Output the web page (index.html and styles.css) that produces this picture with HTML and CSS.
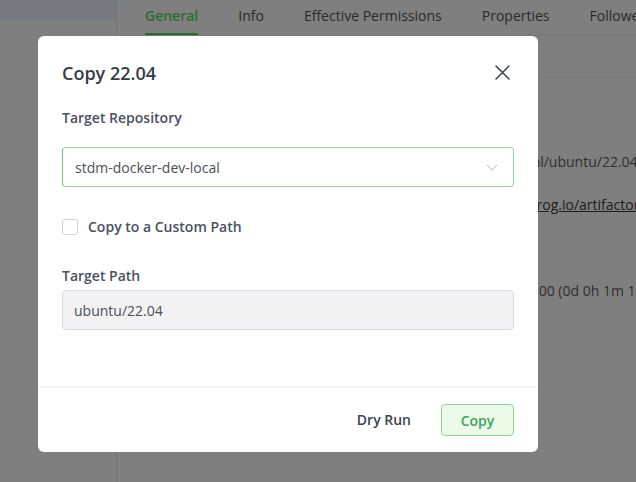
FILE: index.html
```html
<!DOCTYPE html>
<html lang="en">
<head>
<meta charset="utf-8">
<title>Copy 22.04</title>
<link rel="stylesheet" href="styles.css">
</head>
<body>
<div class="page">
  <aside class="sidebar">
    <div class="sidebar-head"></div>
  </aside>
  <main class="main">
    <nav class="tabs">
      <span class="tab active">General</span>
      <span class="tab">Info</span>
      <span class="tab">Effective Permissions</span>
      <span class="tab">Properties</span>
      <span class="tab">Followers</span>
    </nav>
    <div class="toolbar"></div>
    <div class="rows">
      <div class="row"><span class="key">Name:</span><span class="val">22.04</span></div>
      <div class="row"><span class="key">Repository Path:</span><span class="val">stdm-docker-dev-local/ubuntu/22.04/</span></div>
      <div class="row"><span class="key">URL to file:</span><span class="val link">https://stdmcorpus.jfrog.io/artifactory/stdm-docker-dev-local/</span></div>
      <div class="row"><span class="key">Deployed By:</span><span class="val">admin</span></div>
      <div class="row"><span class="key">Created:</span><span class="val">18 March 2023 10:21:00 (0d 0h 1m 11s ago)</span></div>
    </div>
  </main>
</div>

<div class="overlay"></div>

<div class="modal" role="dialog" aria-label="Copy 22.04">
  <header class="modal-head">
    <h2 class="modal-title">Copy 22.04</h2>
    <button class="close" aria-label="Close">
      <svg width="15" height="15" viewBox="0 0 15 15"><path d="M1 1L14 14M14 1L1 14" stroke="#3b4050" stroke-width="1.5" fill="none" stroke-linecap="round"/></svg>
    </button>
  </header>
  <div class="modal-body">
    <div class="label first">Target Repository</div>
    <div class="select">
      <span>stdm-docker-dev-local</span>
      <svg class="chev" width="12" height="7" viewBox="0 0 12 7"><path d="M1 1L6 6L11 1" stroke="#b9bdc8" stroke-width="1" fill="none"/></svg>
    </div>
    <label class="check-row">
      <span class="checkbox"></span>
      <span class="check-label">Copy to a Custom Path</span>
    </label>
    <div class="label">Target Path</div>
    <div class="input">ubuntu/22.04</div>
  </div>
  <footer class="modal-foot">
    <button class="btn-text">Dry Run</button>
    <button class="btn-copy">Copy</button>
  </footer>
</div>
</body>
</html>
```

FILE: styles.css
```css
* { box-sizing: border-box; }
html, body { margin: 0; padding: 0; }
body {
  width: 636px;
  height: 482px;
  overflow: hidden;
  font-family: "Open Sans", "Liberation Sans", sans-serif;
  background: #ffffff;
  position: relative;
}

.page {
  display: flex;
  height: 482px;
}

.sidebar {
  width: 117px;
  flex: none;
  border-right: 1px solid #e6e6e6;
  background: #ffffff;
}
.sidebar-head {
  height: 20px;
  background: #ecf5fc;
}

.main {
  flex: 1;
  min-width: 0;
  overflow: hidden;
}

.tabs {
  display: flex;
  gap: 40px;
  height: 36px;
  padding-left: 28px;
  border-bottom: 1px solid #eeeeee;
  white-space: nowrap;
}
.tab {
  font-size: 14px;
  font-weight: 400;
  line-height: 20px;
  padding-top: 6px;
  color: #555555;
  height: 35px;
}
.tab.active {
  font-weight: 600;
  color: #5ad95e;
  border-bottom: 2px solid #5ad95e;
}

.toolbar {
  height: 42px;
  border-bottom: 1px solid #eeeeee;
}

.rows {
  padding: 19px 0 0 28px;
}
.row {
  display: flex;
  height: 43px;
  align-items: center;
  font-size: 14px;
  line-height: 20px;
  white-space: nowrap;
}
.key {
  width: 254px;
  flex: none;
  color: #5a5a5a;
  font-weight: 600;
}
.val {
  color: #606060;
}
.val.link {
  color: #3c3c3c;
  text-decoration: underline;
}

.overlay {
  position: absolute;
  inset: 0;
  background: rgba(0, 0, 0, 0.5);
}

.modal {
  position: absolute;
  left: 38px;
  top: 36px;
  width: 500px;
  height: 416px;
  background: #ffffff;
  border-radius: 6px;
  display: flex;
  flex-direction: column;
}

.modal-head {
  display: flex;
  justify-content: space-between;
  align-items: center;
  padding: 25px 28px 0 24px;
  height: 49px;
}
.modal-title {
  margin: 0;
  font-size: 18px;
  font-weight: 600;
  line-height: 24px;
  color: #363b48;
}
.close {
  border: 0;
  background: none;
  padding: 0;
  width: 15px;
  height: 15px;
  display: block;
  margin-top: -2px;
}
.close svg { display: block; }

.modal-body {
  padding: 0 24px;
  flex: 1;
}
.label {
  font-size: 14px;
  font-weight: 600;
  line-height: 20px;
  color: #4a5061;
  margin-top: 31px;
  margin-bottom: 4px;
}
.label.first {
  margin-top: 23px;
  margin-bottom: 19px;
}

.select {
  height: 40px;
  border: 1px solid #92d594;
  border-left-color: #74c877;
  border-radius: 4px;
  display: flex;
  align-items: center;
  justify-content: space-between;
  padding: 0 13px 0 12px;
  font-size: 14px;
  color: #4a4f5c;
}
.chev { display: block; margin-top: 1px; margin-right: 2px; }

.check-row {
  display: flex;
  align-items: center;
  gap: 10px;
  margin-top: 32px;
  height: 16px;
}
.checkbox {
  width: 16px;
  height: 16px;
  border: 1px solid #cdd2dd;
  border-radius: 3px;
  flex: none;
}
.check-label {
  font-size: 14px;
  font-weight: 600;
  line-height: 20px;
  color: #4a5061;
}

.input {
  height: 40px;
  background: #f2f2f2;
  border: 1px solid #d6dbe8;
  border-radius: 4px;
  display: flex;
  align-items: center;
  padding: 0 11px;
  font-size: 14px;
  color: #4a4f5c;
}

.modal-foot {
  border-top: 2px solid #f4f4f4;
  display: flex;
  justify-content: flex-end;
  align-items: center;
  gap: 30px;
  padding: 16px 24px;
}
.btn-text {
  border: 0;
  background: none;
  padding: 0;
  font-family: inherit;
  font-size: 14px;
  font-weight: 600;
  color: #3d4250;
  line-height: 32px;
}
.btn-copy {
  width: 73px;
  height: 32px;
  border: 1px solid #8ad39a;
  border-radius: 4px;
  background: #ebfbe8;
  font-family: inherit;
  font-size: 14px;
  font-weight: 600;
  color: #3ea45e;
  padding: 0;
}
```
